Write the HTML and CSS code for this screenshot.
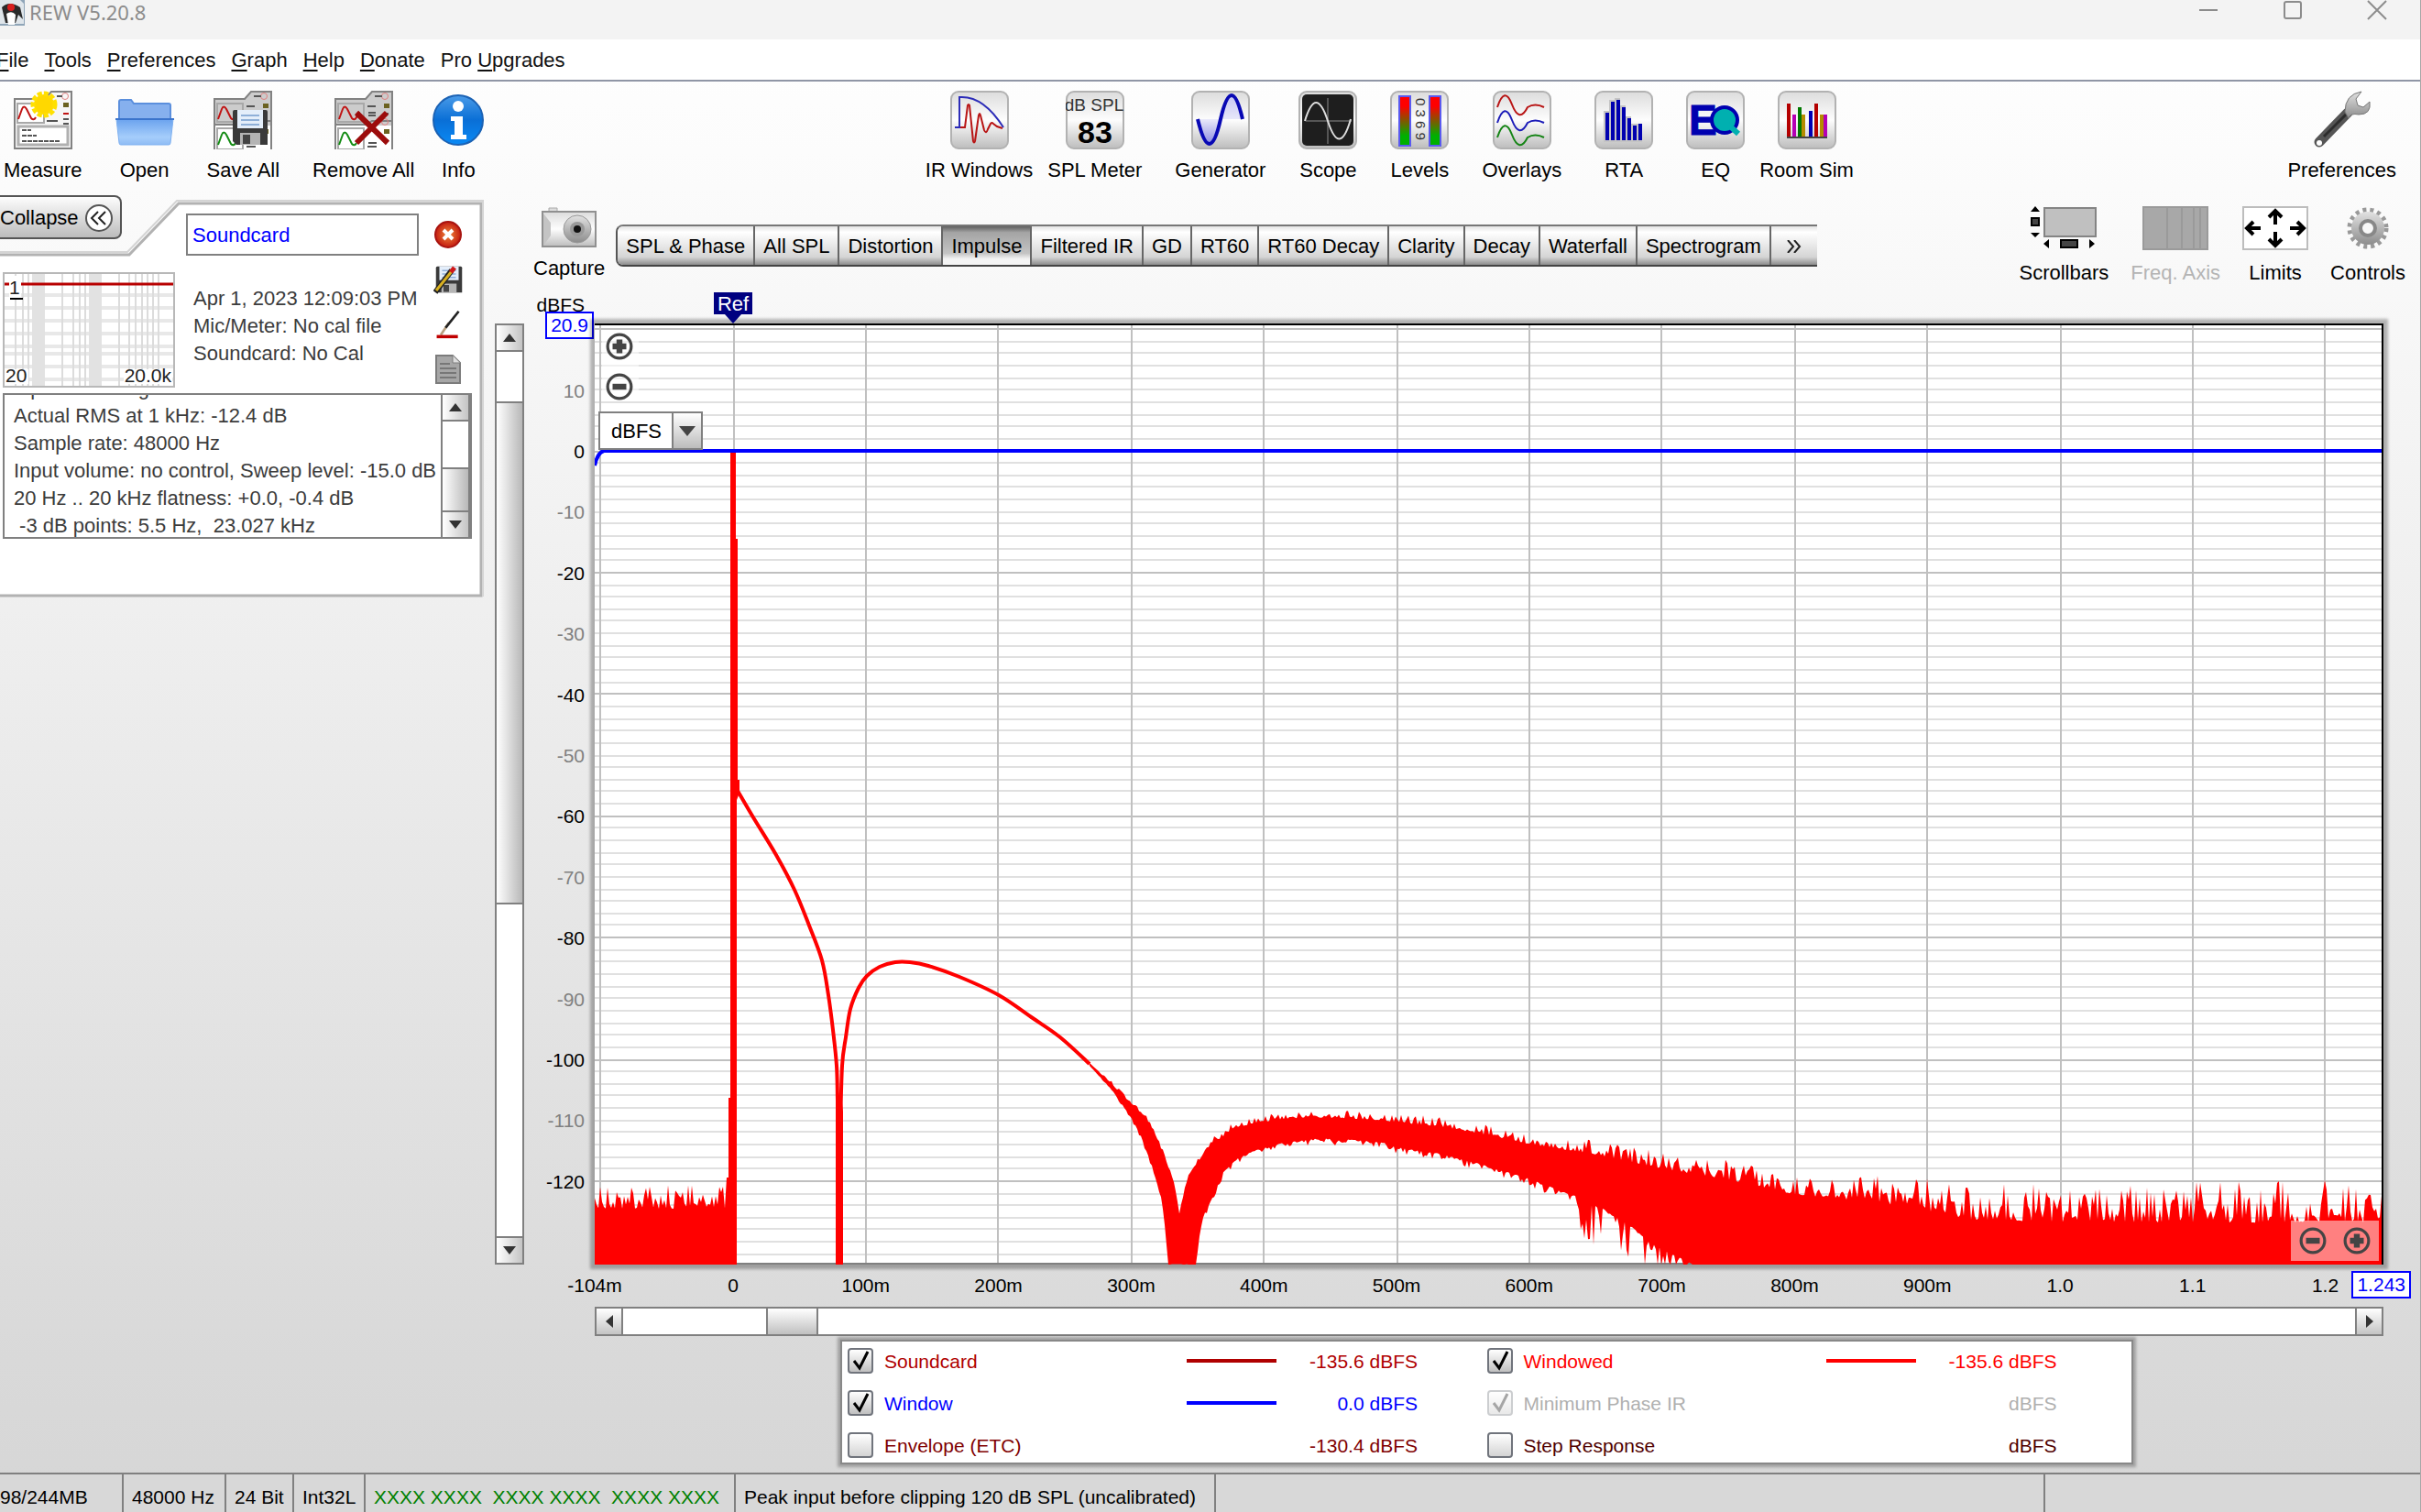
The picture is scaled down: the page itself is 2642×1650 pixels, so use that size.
FILE: index.html
```html
<!DOCTYPE html>
<html lang="en">
<head>
<meta charset="utf-8">
<title>REW V5.20.8</title>
<link rel="stylesheet" href="styles.css">
</head>
<body>
<svg class="defs" aria-hidden="true">
  <defs>
    <linearGradient id="tile" x1="0" y1="0" x2="0" y2="1"><stop offset="0" stop-color="#dcdcdc"/><stop offset=".5" stop-color="#fdfdfd"/><stop offset="1" stop-color="#bdbdbd"/></linearGradient>
    <linearGradient id="meter" x1="0" y1="0" x2="0" y2="1"><stop offset=".2" stop-color="#f00"/><stop offset=".8" stop-color="#00b000"/></linearGradient>
    <linearGradient id="folder" x1="0" y1="0" x2="0" y2="1"><stop offset="0" stop-color="#6aa2ee"/><stop offset=".7" stop-color="#a5cdfb"/><stop offset="1" stop-color="#8fbcf4"/></linearGradient>
    <linearGradient id="info" x1="0" y1="0" x2="0" y2="1"><stop offset="0" stop-color="#4a9be8"/><stop offset=".5" stop-color="#0a6fd6"/><stop offset="1" stop-color="#0a8af5"/></linearGradient>
    <linearGradient id="steel" x1="0" y1="0" x2="0" y2="1"><stop offset="0" stop-color="#e2e2e2"/><stop offset="1" stop-color="#8c8c8c"/></linearGradient>
    <linearGradient id="wave" x1="0" y1="0" x2="0" y2="1"><stop offset="0" stop-color="#c6c6f2"/><stop offset=".5" stop-color="#e8e8fa"/><stop offset="1" stop-color="#8c8ce0"/></linearGradient>
    <radialGradient id="stop"><stop offset="0" stop-color="#f08a3c"/><stop offset="1" stop-color="#c41c10"/></radialGradient>
    <symbol id="base" viewBox="0 0 64 64"><rect x="1" y="1" width="62" height="62" rx="8" fill="url(#tile)" stroke="#b2b2b2" stroke-width="2"/></symbol>
    <symbol id="floppy" viewBox="0 0 40 40"><path d="M1 3q0-2 2-2h34q2 0 2 2v36H5l-4-4z" fill="#3a3a3a"/><path d="M6 1h28v20H6z" fill="#e4eefa"/><path d="M10 7h20M10 12h20M10 17h20" stroke="#8fb0d8" stroke-width="2"/><path d="M9 26h22v13H9z" fill="#b4b4b4"/><path d="M12 28h8v10h-8z" fill="#444"/></symbol>
    <symbol id="pages" viewBox="0 0 64 64"><path d="M1 63V9h33l7-8h22v62" fill="#fff"/><path d="M1 38V9h33l7-8h22v37z" fill="#ccc"/><path d="M1 64V9h33l7-8h22v63M1 37h33l7-4h22" fill="none" stroke="#828282" stroke-width="2"/><path d="M4 14h28v20H4zM4 41h28v23H4z" fill="none" stroke="#a8a8a8" stroke-width="2"/><path d="M5 31l4-11q2-5 5 0l5 10q3 3 5-1l3-6" fill="none" stroke="#c01414" stroke-width="2"/><path d="M5 59l4-11q2-5 5 0l5 10q3 3 5-1" fill="none" stroke="#148c14" stroke-width="2"/><circle cx="55" cy="6" r="3.500" fill="none" stroke="#e08080"/><circle cx="55" cy="34" r="3.500" fill="none" stroke="#e08080"/><path d="M44 6h8M36 17h9M37 24h8M37 27h8M37 57h9M36 61h10M54 25h5M54 54h5" stroke="#555" stroke-width="2"/><path d="M54 14h6v5h-6zM54 42h6v5h-6z" fill="#6b6220"/></symbol>
    <symbol id="plus" viewBox="0 0 28 28"><circle cx="14" cy="14" r="12" fill="none" stroke="#444" stroke-width="3"/><path d="M14 7v14M7 14h14" stroke="#444" stroke-width="6"/></symbol>
    <symbol id="minus" viewBox="0 0 28 28"><circle cx="14" cy="14" r="12" fill="none" stroke="#444" stroke-width="3"/><path d="M7 14h14" stroke="#444" stroke-width="6"/></symbol>
  </defs>
</svg>

<header class="titlebar">
  <svg class="app-icon" viewBox="0 0 27 28"><rect width="27" height="28" fill="#8fa5b8"/><path d="M0 0h22l4 4v22H0z" fill="#dfe5ea"/><path d="M2 8q8-8 20 0l3 13-5-5-3 9H6z" fill="#2a2a2a"/><path d="M7 15q6-4 10 1l-1 11H9z" fill="#fff"/><circle cx="12" cy="8" r="4" fill="#d81e1e"/></svg>
  <h1>REW V5.20.8</h1>
  <div class="window-controls">
    <button type="button" aria-label="Minimize"><svg viewBox="0 0 20 20"><path d="M0 10h20"/></svg></button>
    <button type="button" aria-label="Maximize"><svg viewBox="0 0 20 20"><rect x="1" y="1" width="18" height="18" rx="2"/></svg></button>
    <button type="button" aria-label="Close"><svg viewBox="0 0 20 20"><path d="M0 0l20 20M20 0L0 20"/></svg></button>
  </div>
</header>

<nav class="menubar">
  <a href="#"><u>F</u>ile</a>
  <a href="#"><u>T</u>ools</a>
  <a href="#"><u>P</u>references</a>
  <a href="#"><u>G</u>raph</a>
  <a href="#"><u>H</u>elp</a>
  <a href="#"><u>D</u>onate</a>
  <a href="#">Pro <u>U</u>pgrades</a>
</nav>

<div class="toolbar">
  <div class="tools">
    <button type="button" class="tool"><svg viewBox="0 0 64 64"><path d="M1 63V9h33l7-8h22v62z" fill="#f6f6f6" stroke="#828282" stroke-width="2"/><path d="M4 14h29v21H4z" fill="#fff" stroke="#a8a8a8" stroke-width="2"/><path d="M5 31l4-11q2-5 5 0l5 10q3 3 5-1" fill="none" stroke="#c01414" stroke-width="2"/><path d="M5 39h54v20H5z" fill="#fff" stroke="#b0b0b0" stroke-width="3"/><path d="M9 43h10M9 49h16M9 55h41" stroke="#555" stroke-width="2" stroke-dasharray="5 1"/><circle cx="56" cy="6" r="3.500" fill="none" stroke="#e08080"/><path d="M47 6h6M36 33h12M54 31h6M54 36h6" stroke="#555" stroke-width="2"/><path d="M54 25h6" stroke="#c01414" stroke-width="2"/><path d="M54 13h6v5h-6z" fill="#6b6220"/><circle cx="33" cy="15" r="11" fill="#ffd800"/><circle cx="33" cy="15" r="12" fill="none" stroke="#ffe000" stroke-width="5" stroke-dasharray="5 2"/></svg>Measure</button>
    <button type="button" class="tool"><svg viewBox="0 0 64 64"><path d="M4 32V12q0-2 2-2h11l3 4h38q2 0 2 2v16z" fill="#86b0ee" stroke="#5b8fdd" stroke-width="2"/><path d="M1 31h62l-3 26q0 2-2 2H6q-2 0-2-2z" fill="url(#folder)" stroke="#7eb0f0"/><path d="M0 31h64" stroke="#3b74cc" stroke-width="2"/></svg>Open</button>
    <button type="button" class="tool"><svg viewBox="0 0 64 64"><use href="#pages"/><use href="#floppy" x="20" y="20" width="40" height="40"/></svg>Save All</button>
    <div class="pair">
      <button type="button" class="tool"><svg viewBox="0 0 64 64"><use href="#pages"/><path d="M24 24l34 33M57 24L24 57" stroke="#9c0c0c" stroke-width="6"/></svg>Remove All</button>
      <button type="button" class="tool"><svg class="round" viewBox="0 0 56 64"><circle cx="28" cy="32" r="27" fill="url(#info)" stroke="#1b62b4" stroke-width="2"/><circle cx="28" cy="17" r="6" fill="#fff"/><path d="M20 28h13v20h4v5H20v-5h4V33h-4z" fill="#fff"/></svg>Info</button>
    </div>
  </div>

  <div class="tools modules">
    <div class="pair">
      <button type="button" class="tool"><svg viewBox="0 0 64 64"><use href="#base"/><path d="M5 40h11l3-24q1-2 2 0l4 39q1 3 2 0l4-28q1-4 2 0l4 16q2 5 4-1l3-6q1-2 3 0l4 3 6 2" fill="none" stroke="#b81414" stroke-width="2"/><path d="M5 40h5V7q26-2 48 33" fill="none" stroke="#2c2cb8" stroke-width="2"/></svg>IR Windows</button>
      <button type="button" class="tool"><svg viewBox="0 0 64 64"><use href="#base"/><text x="31" y="22" class="tile-small">dB SPL</text><text x="32" y="57" class="tile-large">83</text></svg>SPL Meter</button>
    </div>
    <button type="button" class="tool"><svg viewBox="0 0 64 64"><use href="#base"/><path d="M7 31q13 54 25 0q12-52 24 0z" fill="url(#wave)"/><path d="M7 31q13 54 25 0q12-52 24 0" fill="none" stroke="#0808b4" stroke-width="4"/></svg>Generator</button>
    <button type="button" class="tool"><svg viewBox="0 0 64 64"><use href="#base"/><rect x="4" y="4" width="56" height="56" rx="5" fill="#1e1e1e"/><path d="M32 8v50M8 33h50" stroke="#555" stroke-width="2"/><path d="M7 33q12-40 25 0q13 40 25-2" fill="none" stroke="#ddd" stroke-width="2"/></svg>Scope</button>
    <button type="button" class="tool"><svg viewBox="0 0 64 64"><use href="#base"/><path d="M10 6h12v54H10zM43 6h12v54H43z" fill="url(#meter)" stroke="#5a5af0" stroke-width="2"/><text class="tile-digits" transform="translate(28 8) rotate(90)">0 3 6 9</text></svg>Levels</button>
    <button type="button" class="tool"><svg viewBox="0 0 64 64"><use href="#base"/><g fill="none" stroke-width="2"><path d="M5 18q8-24 16-3t17 3q8-5 18 0" stroke="#b81414"/><path d="M5 35q8-24 16-3t17 3q8-5 18 0" stroke="#1c1cb8"/><path d="M5 51q8-24 16-3t17 3q8-5 18 0" stroke="#148414"/></g></svg>Overlays</button>
    <button type="button" class="tool"><svg viewBox="0 0 64 64"><use href="#base"/><path d="M10 56V22h6V10h6V8h6v8h6v12h6v8h12v20z" fill="#c4c4c4"/><path d="M12 54V24h4v30zM18 54V12h4v42zM24 54V10h4v44zM30 54V18h4v36zM36 54V30h4v24zM42 54V38h4v16zM48 54V36h4v18z" fill="#0000b0"/></svg>RTA</button>
    <div class="pair">
      <button type="button" class="tool"><svg viewBox="0 0 64 64"><use href="#base"/><text x="3" y="48" class="tile-eq">E</text><circle cx="42" cy="32" r="14" fill="#00b0b0" stroke="#0000b0" stroke-width="4"/><path d="M46 37l11 10" stroke="#00b0b0" stroke-width="6"/></svg>EQ</button>
      <button type="button" class="tool"><svg viewBox="0 0 64 64"><use href="#base"/><path d="M10 14h4v36h-4zM40 14h4v36h-4z" fill="#b40000"/><path d="M16 26h4v24h-4zM50 26h4v24h-4z" fill="#b400b4"/><path d="M22 18h4v32h-4z" fill="#007800"/><path d="M26 26h4v24h-4zM46 26h4v24h-4z" fill="#b48c00"/><path d="M34 22h4v28h-4z" fill="#0000b4"/><path d="M10 51h44" stroke="#444" stroke-width="2"/></svg>Room Sim</button>
    </div>
  </div>

  <div class="tools">
    <button type="button" class="tool"><svg viewBox="0 0 64 64"><path d="M7 56L38 24" stroke="#555" stroke-width="11" stroke-linecap="round"/><path d="M12 50L36 26" stroke="#2c2c2c" stroke-width="3"/><circle cx="7" cy="57" r="3" fill="#fff"/><path d="M35 23q0-19 18-22l-6 8 2 7 6 2 7-6q2 14-12 14-9-2-11 4z" fill="url(#steel)" stroke="#777"/></svg>Preferences</button>
  </div>
</div>

<main class="workspace">
  <aside class="sidebar">
    <section class="card">
      <svg class="card-outline" viewBox="0 0 530 440" aria-hidden="true"><path d="M-4 65H141L195 9H525V437H-4z" fill="#fff" stroke="#b2b2b2" stroke-width="3"/><path d="M-4 62H139L193 6H527V438" fill="none" stroke="#d4d4d4" stroke-width="2"/></svg>
      <div class="card-left">
        <button type="button" class="collapse">Collapse<svg viewBox="0 0 30 30"><circle cx="15" cy="15" r="14" fill="#fff" stroke="#555" stroke-width="2"/><path d="M14 8l-7 7 7 7M22 8l-7 7 7 7" fill="none" stroke="#222" stroke-width="2"/></svg></button>
        <svg class="thumb" viewBox="0 0 188 126"><rect x="1" y="1" width="186" height="124" fill="#fff" stroke="#b8b8b8" stroke-width="2"/><path d="M2 25h184M2 39h184M2 53h184M2 67h184M2 81h184M2 89h184M2 103h184M2 117h184" stroke="#e8e8e8" stroke-width="4"/><path d="M14 2v122M22 2v122M28 2v122M65 2v122M77 2v122M84 2v122M90 2v122M127 2v122M138 2v122M145 2v122M152 2v122M158 2v122M164 2v122M170 2v122" stroke="#dcdcdc" stroke-width="2"/><path d="M32 2h14v122H32zM94 2h14v122H94z" fill="#e2e2e2"/><path d="M2 13h184" stroke="#b80000" stroke-width="3"/><path d="M7 4h13v24H7zM2 106h26v16H2zM132 106h53v16h-53z" fill="#fff"/><path d="M8 29h14" stroke="#000" stroke-width="2"/><text x="7" y="24" class="thumb-text">1</text><text x="3" y="120" class="thumb-text">20</text><text x="184" y="120" class="thumb-text end">20.0k</text></svg>
      </div>
      <div class="card-middle">
        <input class="name" type="text" value="Soundcard" aria-label="Measurement name">
        <p>Apr 1, 2023 12:09:03 PM<br>Mic/Meter: No cal file<br>Soundcard: No Cal</p>
      </div>
      <div class="card-actions">
        <button type="button" aria-label="Remove"><svg viewBox="0 0 32 32"><circle cx="16" cy="16" r="14" fill="url(#stop)" stroke="#a81410" stroke-width="2"/><path d="M11 11l10 10M21 11L11 21" stroke="#fff" stroke-width="4"/></svg></button>
        <button type="button" aria-label="Save as"><svg viewBox="0 0 32 32"><use href="#floppy" x="2" y="1" width="30" height="30"/><path d="M2 30L20 6" stroke="#222" stroke-width="6"/><path d="M3 28L20 7" stroke="#d8b020" stroke-width="3"/><path d="M19 8l4-5" stroke="#d01818" stroke-width="5"/></svg></button>
        <button type="button" aria-label="Trace colour"><svg viewBox="0 0 32 36"><path d="M7 31l10-15" stroke="#b8a080" stroke-width="3"/><path d="M13 22L29 2" stroke="#222" stroke-width="3"/><path d="M2 33h26" stroke="#c00000" stroke-width="4"/></svg></button>
        <button type="button" aria-label="Notes"><svg viewBox="0 0 32 32"><path d="M3 1h18l8 8v22H3z" fill="#a6a6a6" stroke="#7c7c7c" stroke-width="2"/><path d="M21 1v8h8" fill="#ddd" stroke="#7c7c7c"/><path d="M7 10h11M7 15h18M7 20h18M7 25h18" stroke="#777" stroke-width="2"/></svg></button>
      </div>
      <div class="notes">
        <div class="notes-text">
          <p>Input RMS target: -12.0 dB</p>
          <p>Actual RMS at 1 kHz: -12.4 dB</p>
          <p>Sample rate: 48000 Hz</p>
          <p>Input volume: no control, Sweep level: -15.0 dB</p>
          <p>20 Hz .. 20 kHz flatness: +0.0, -0.4 dB</p>
          <p>&nbsp;-3 dB points: 5.5 Hz,&nbsp; 23.027 kHz</p>
        </div>
        <div class="scroll vertical notes-scroll">
          <button type="button" class="up" aria-label="Scroll up"></button>
          <div class="track"><span class="space notes-space"></span><span class="grip notes-grip"></span></div>
          <button type="button" class="down" aria-label="Scroll down"></button>
        </div>
      </div>
    </section>
    <div class="scroll vertical list-scroll">
      <button type="button" class="up" aria-label="Scroll up"></button>
      <div class="track"><span class="space list-before"></span><span class="grip list-grip"></span><span class="space list-after"></span></div>
      <button type="button" class="down" aria-label="Scroll down"></button>
    </div>
  </aside>

  <section class="graph">
    <div class="graph-bar">
      <button type="button" class="tool capture"><svg class="camera" viewBox="0 0 60 48"><path d="M8 6V2h9v4" fill="#ddd" stroke="#aaa"/><path d="M1 6h58v38H1z" fill="url(#tile)" stroke="#909090" stroke-width="2"/><path d="M2 8l8 10v14L2 43z" fill="#c4c4c4"/><circle cx="39" cy="25" r="15" fill="url(#steel)" stroke="#999"/><circle cx="39" cy="25" r="8" fill="#999"/><circle cx="39" cy="25" r="4" fill="#111"/></svg>Capture</button>
      <div class="tabs">
        <button type="button">SPL &amp; Phase</button><button type="button">All SPL</button><button type="button">Distortion</button><button type="button" class="active">Impulse</button><button type="button">Filtered IR</button><button type="button">GD</button><button type="button">RT60</button><button type="button">RT60 Decay</button><button type="button">Clarity</button><button type="button">Decay</button><button type="button">Waterfall</button><button type="button">Spectrogram</button><button type="button" class="more" aria-label="More graphs"><svg viewBox="0 0 18 14"><path d="M2 0l6 7-6 7M9 0l6 7-6 7" fill="none" stroke="#222" stroke-width="2"/></svg></button>
      </div>
      <div class="tools graph-tools">
        <button type="button" class="tool"><svg class="wide" viewBox="0 0 72 48"><path d="M15 2h56v31H15z" fill="#c0c0c0" stroke="#848484" stroke-width="2"/><path d="M0 6h10L5 0zM0 29h10l-5 5zM20 36v10l-6-5zM64 36v10l6-5z"/><path d="M1 13h8v8H1zM33 37h18v8H33z" fill="#444" stroke="#000" stroke-width="2"/></svg>Scrollbars</button>
        <button type="button" class="tool" disabled><svg class="wide" viewBox="0 0 72 48"><path d="M1 1h70v46H1zM27 1v46M43 1v46M56 1v46M63 1v46" fill="#a8a8a8" stroke="#9a9a9a" stroke-width="2"/></svg>Freq. Axis</button>
        <button type="button" class="tool"><svg class="wide" viewBox="0 0 72 48"><path d="M1 1h70v46H1z" fill="#fff" stroke="#bdbdbd" stroke-width="2"/><path d="M36 20V7M29 12l7-7 7 7M36 28v13M29 36l7 7 7-7M20 24H7M12 17l-7 7 7 7M52 24h13M60 17l7 7-7 7" fill="none" stroke="#000" stroke-width="4"/></svg>Limits</button>
        <button type="button" class="tool"><svg class="wide" viewBox="0 0 72 48"><circle cx="36" cy="24" r="20" fill="none" stroke="#999" stroke-width="5" stroke-dasharray="4 4"/><circle cx="36" cy="24" r="18" fill="url(#steel)"/><circle cx="36" cy="24" r="8" fill="#f8f8f8" stroke="#888" stroke-width="4"/></svg>Controls</button>
      </div>
    </div>

    <div class="plot-grid">
      <div class="y-axis" id="y-axis"><span class="unit">dBFS</span><span class="limit y-limit">20.9</span></div>
      <div class="plot" id="plot">
        <div class="ref">Ref</div>
        <div class="zoom zoom-y">
          <button type="button" aria-label="Zoom in vertically"><svg><use href="#plus"/></svg></button>
          <button type="button" aria-label="Zoom out vertically"><svg><use href="#minus"/></svg></button>
        </div>
        <select class="unit-select" aria-label="Vertical unit"><option>dBFS</option><option>%</option></select>
        <div class="zoom zoom-x">
          <button type="button" aria-label="Zoom out horizontally"><svg><use href="#minus"/></svg></button>
          <button type="button" aria-label="Zoom in horizontally"><svg><use href="#plus"/></svg></button>
        </div>
      </div>
      <div class="x-axis" id="x-axis"><span class="limit x-limit">1.243</span></div>
      <div class="scroll horizontal">
        <button type="button" class="left" aria-label="Scroll left"></button>
        <div class="track"><span class="space time-before"></span><span class="grip time-grip"></span><span class="space time-after"></span></div>
        <button type="button" class="right" aria-label="Scroll right"></button>
      </div>
    </div>

    <div class="legend">
      <div class="trace dark-red"><input type="checkbox" id="t1" checked><label for="t1">Soundcard</label><i class="swatch"></i><output>-135.6 dBFS</output></div>
      <div class="trace red"><input type="checkbox" id="t2" checked><label for="t2">Windowed</label><i class="swatch"></i><output>-135.6 dBFS</output></div>
      <div class="trace blue"><input type="checkbox" id="t3" checked><label for="t3">Window</label><i class="swatch"></i><output>0.0 dBFS</output></div>
      <div class="trace off"><input type="checkbox" id="t4" checked disabled><label for="t4">Minimum Phase IR</label><i></i><output>dBFS</output></div>
      <div class="trace maroon"><input type="checkbox" id="t5"><label for="t5">Envelope (ETC)</label><i></i><output>-130.4 dBFS</output></div>
      <div class="trace brown"><input type="checkbox" id="t6"><label for="t6">Step Response</label><i></i><output>dBFS</output></div>
    </div>
  </section>
</main>

<footer class="status">
  <span class="memory">98/244MB</span>
  <span class="rate">48000 Hz</span>
  <span class="bits">24 Bit</span>
  <span class="format">Int32L</span>
  <span class="channels">XXXX XXXX&nbsp; XXXX XXXX&nbsp; XXXX XXXX</span>
  <span class="message">Peak input before clipping 120 dB SPL (uncalibrated)</span>
  <span class="spare"></span>
  <span class="last"></span>
</footer>
<script src="chart.js"></script>
</body>
</html>
```
FILE: styles.css
```css
* { box-sizing: border-box; }

body {
  margin: 0;
  min-height: 100vh;
  display: flex;
  flex-direction: column;
  overflow-x: hidden;
  background: linear-gradient(#fff, #fcfcfc 10%, #f0f0f0 38%, #d9d9d9 90%, #d6d6d6);
  border-right: 1px solid #a8a8a8;
  color: #000;
  font: 22px/30px "Liberation Sans", Arial, sans-serif;
}

button, input, select {
  margin: 0;
  padding: 0;
  border: 0;
  background: none;
  color: inherit;
  font: inherit;
}

p, h1 { margin: 0; }

.defs { position: absolute; width: 0; height: 0; }

.titlebar {
  display: flex;
  align-items: flex-start;
  height: 43px;
  background: #f3f3f3;
  color: #8c8c8c;
}
.app-icon { width: 27px; height: 28px; }
.titlebar h1 {
  margin-left: 5px;
  font: 22px/26px "Noto Sans", "Open Sans", sans-serif;
}
.window-controls { display: flex; gap: 72px; margin-left: auto; padding-right: 37px; }
.window-controls svg {
  display: block;
  width: 20px;
  height: 22px;
  overflow: visible;
  fill: none;
  stroke: #8c8c8c;
  stroke-width: 2;
}

.menubar {
  display: flex;
  gap: 17px;
  height: 46px;
  margin-left: -4px;
  padding-top: 8px;
  background: #fff;
  border-bottom: 2px solid #9096a6;
}
.menubar a { color: #111; text-decoration: none; }
.menubar u { text-underline-offset: 3px; text-decoration-thickness: 2px; }

.toolbar {
  display: flex;
  justify-content: space-between;
  height: 116px;
  padding: 10px 26px 0 4px;
}
.tools { display: flex; align-items: flex-start; gap: 36px; }
.pair { display: flex; gap: 20px; }
.modules { margin-left: 8px; }
.modules .pair { gap: 16px; }
.tool {
  display: flex;
  flex-direction: column;
  align-items: center;
  gap: 8px;
  white-space: nowrap;
}
.tool svg { width: 64px; height: 64px; }
.tool svg.round { width: 56px; }
.tool svg.wide { width: 72px; height: 48px; }
.tool svg.camera { width: 60px; height: 48px; }
.tool:disabled { color: #b4b4b4; }
.tile-small { font-size: 19px; text-anchor: middle; fill: #333; }
.tile-large { font-size: 34px; font-weight: bold; text-anchor: middle; }
.tile-digits { font-size: 15px; fill: #333; }
.tile-eq { font-size: 46px; font-weight: bold; fill: #0000b0; stroke: #0000b0; }

.workspace { flex: 1; display: flex; }
.sidebar { display: flex; align-items: flex-start; gap: 10px; width: 572px; }

.card {
  position: relative;
  display: grid;
  grid-template-columns: 203px 254px 48px;
  width: 530px;
  height: 448px;
  align-content: start;
  padding-top: 8px;
}
.card-outline { position: absolute; z-index: -1; left: 0; top: 8px; width: 530px; height: 440px; }
.card-left { display: flex; flex-direction: column; align-items: flex-start; gap: 36px; }
.collapse {
  display: flex;
  align-items: center;
  gap: 7px;
  width: 133px;
  height: 48px;
  padding-top: 2px;
  border: 2px solid #555;
  border-left: 0;
  border-radius: 0 8px 8px 0;
  background: linear-gradient(#fdfdfd, #bcbcbc);
}
.collapse svg { width: 30px; height: 30px; flex: none; }
.thumb { width: 188px; height: 126px; margin-left: 3px; }
.thumb-text { font-size: 21px; fill: #222; }
.end { text-anchor: end; }

.card-middle { padding-top: 20px; }
.name {
  width: 254px;
  height: 46px;
  padding: 2px 5px 0;
  border: 2px solid #808080;
  background: #fff;
  color: #00f;
}
.card-middle p { padding: 32px 0 0 8px; color: #3c3c3c; white-space: nowrap; }
.card-actions {
  display: flex;
  flex-direction: column;
  gap: 17px;
  padding: 27px 0 0 16px;
}
.card-actions svg { display: block; width: 32px; height: 32px; }

.notes {
  grid-column: 1 / -1;
  display: flex;
  width: 512px;
  height: 159px;
  margin: 6px 0 0 3px;
  border: 2px solid #808080;
  background: #fff;
}
.notes-text {
  flex: 1;
  display: flex;
  flex-direction: column;
  justify-content: flex-end;
  overflow: hidden;
  padding-left: 10px;
  color: #3c3c3c;
  white-space: nowrap;
}
.notes-text p:last-child { margin-bottom: -3px; }

.scroll { display: flex; border: 2px solid #808080; background: #fff; }
.scroll button {
  flex: none;
  display: flex;
  align-items: center;
  justify-content: center;
  background: linear-gradient(#fff, #c4c4c4);
}
.scroll button::after { content: ""; border: 7px solid transparent; }
.scroll .track { flex: 1; display: flex; }
.vertical { flex-direction: column; width: 32px; }
.vertical .track { flex-direction: column; }
.vertical button { height: 29px; background: linear-gradient(90deg, #fff, #c4c4c4); }
.vertical .up { border-bottom: 2px solid #808080; }
.vertical .down { border-top: 2px solid #808080; }
.scroll .up::after { border-top: 0; border-bottom: 9px solid #333; }
.scroll .down::after { border-bottom: 0; border-top: 9px solid #333; }
.scroll .left::after { border-left: 0; border-right: 8px solid #333; }
.scroll .right::after { border-right: 0; border-left: 8px solid #333; }
.vertical .grip { border: solid #808080; border-width: 2px 0; background: linear-gradient(90deg, #fff, #b8b8b8); }
.notes-scroll { border-width: 0 2px; }
.notes-scroll .grip { border-bottom: 0; }
.notes-space { flex: 51; }
.notes-grip { flex: 46; }

.list-scroll { align-self: stretch; margin: 148px 0 227px; }
.list-before { flex: 54; }
.list-grip { flex: 547; }
.list-after { flex: 363; }

.graph { flex: 1; display: flex; flex-direction: column; min-width: 0; }
.graph-bar { display: flex; align-items: flex-start; height: 148px; padding: 20px 16px 0 10px; }
.capture .camera { margin-bottom: -3px; }
.tabs {
  display: flex;
  height: 46px;
  margin: 20px 0 0 12px;
  border: 2px solid #666;
  border-color: #777 #555 #444;
  border-right: 0;
  border-radius: 8px 0 0 8px;
  overflow: hidden;
}
.tabs button {
  padding: 2px 9px 0;
  border-right: 2px solid #666;
  background: linear-gradient(#e4e4e4, #fff 15%, #d4d4d4 80%, #8c8c8c);
  white-space: nowrap;
}
.tabs .active { background: linear-gradient(#606060, #a4a4a4 16%, #c4c4c4 70%, #f4f4f4 85%); }
.tabs .more { width: 50px; border-right: 0; }
.more svg { width: 18px; height: 14px; }
.graph-tools { gap: 24px; margin-left: auto; }
.graph-tools .tool { gap: 10px; }

.plot-grid {
  flex: 1;
  display: grid;
  grid-template: 1fr 46px 32px / 77px 1fr;
  padding-right: 40px;
}
.y-axis, .x-axis { position: relative; font-size: 21px; }
.y-axis span, .x-axis span { position: absolute; line-height: 22px; white-space: nowrap; }
.y-axis .tick { right: 11px; padding-top: 2px; transform: translateY(-50%); }
.y-axis .minor { color: #808080; }
.y-axis .unit { right: 11px; top: -31px; }
.x-axis .tick { top: 12px; transform: translateX(-50%); }
.y-axis .limit, .x-axis .limit {
  border: 2px solid #00f;
  background: #fff;
  color: #00f;
  padding: 0 4px;
  line-height: 26px;
}
.y-axis .y-limit { right: 1px; top: -13px; }
.x-axis .x-limit { right: -30px; top: 7px; }
.x-axis { grid-column: 2; }
.horizontal { grid-column: 2; }
.horizontal button { width: 29px; }
.horizontal .left, .horizontal .grip { border-right: 2px solid #808080; }
.horizontal .right, .horizontal .grip { border-left: 2px solid #808080; }
.horizontal .grip { background: linear-gradient(#fff, #c0c0c0); }
.time-before { flex: 156; }
.time-grip { flex: 52; }
.time-after { flex: 1673; }

.plot {
  position: relative;
  background: #fff;
  border: solid #000;
  border-width: 2px 2px 0 0;
  box-shadow: 0 0 3px 5px rgba(0, 0, 0, .28);
}
.plot .chart { position: absolute; left: 0; top: -2px; width: calc(100% + 2px); height: calc(100% + 2px); }
.ref {
  position: absolute;
  left: 130px;
  top: -36px;
  width: 42px;
  height: 24px;
  background: #000080;
  color: #fff;
  line-height: 26px;
  text-align: center;
}
.ref::after {
  content: "";
  position: absolute;
  left: 12px;
  top: 24px;
  border: 9px solid transparent;
  border-top: 10px solid #000080;
  border-bottom: 0;
}
.zoom { position: absolute; display: flex; }
.zoom svg { display: block; width: 30px; height: 30px; }
.zoom-y { flex-direction: column; gap: 14px; left: 8px; top: 8px; padding: 0 6px 0 4px; background: rgba(255, 255, 255, .5); }
.zoom-x { gap: 18px; right: 3px; bottom: 4px; padding: 7px 9px; background: rgba(255, 255, 255, .5); }
.unit-select {
  position: absolute;
  left: 4px;
  top: 94px;
  width: 114px;
  height: 42px;
  padding: 2px 0 0 12px;
  appearance: none;
  border: 2px solid #808080;
  background:
    url("data:image/svg+xml,%3Csvg xmlns='http://www.w3.org/2000/svg' width='18' height='11'%3E%3Cpath d='M0 0h18L9 11z' fill='%23444'/%3E%3C/svg%3E") no-repeat right 6px center,
    linear-gradient(#808080, #808080) no-repeat right 30px top / 2px 100%,
    linear-gradient(#fff, #bcbcbc) no-repeat right / 30px 100%,
    #fff;
}

.legend {
  display: grid;
  grid-template-columns: 1fr 1fr;
  grid-auto-rows: 46px;
  align-content: center;
  align-self: center;
  width: 1411px;
  height: 136px;
  margin: 4px 0 9px 32px;
  padding: 1px 6px 0;
  border: 2px solid #888;
  background: #fff;
  box-shadow: 0 0 3px 3px rgba(0, 0, 0, .26);
  font-size: 21px;
}
.trace {
  display: grid;
  grid-template-columns: 28px 342px 98px 154px;
  align-items: center;
}
.trace label { padding: 2px 0 0 12px; }
.trace output { padding-top: 2px; text-align: right; }
.swatch { height: 4px; background: currentColor; }
.trace input {
  width: 28px;
  height: 28px;
  appearance: none;
  border: 2px solid #70747c;
  border-radius: 4px;
  background: linear-gradient(#fff, #d4d4d4);
}
.trace input:checked {
  background:
    url("data:image/svg+xml,%3Csvg xmlns='http://www.w3.org/2000/svg' viewBox='0 0 24 24'%3E%3Cpath d='M5 12l6 8L20 2' fill='none' stroke='%23000' stroke-width='3'/%3E%3C/svg%3E") center / 24px 24px no-repeat,
    linear-gradient(#fff, #c0c0c0);
}
.trace input:disabled { opacity: .35; }
.dark-red { color: #b00000; }
.red { color: #f00; }
.blue { color: #00f; }
.off { color: #b0b0b0; }
.maroon { color: #800000; }
.brown { color: #500000; }

.status {
  display: flex;
  height: 43px;
  border-top: 2px solid #808080;
  background: #d8d8d8;
  font-size: 21px;
  white-space: nowrap;
}
.status span { padding: 10px 0 0 9px; border-right: 2px solid #808080; }
.status .memory { width: 135px; padding-left: 0; }
.status .rate { width: 112px; }
.status .bits { width: 74px; }
.status .format { width: 78px; }
.status .channels { width: 404px; color: #008000; }
.status .message { width: 524px; }
.status .spare { flex: 1; }
.status .last { width: 409px; border-right: 0; }
```
FILE: chart.js
```js
// Impulse response plot. Trace points are in plot units: 1952 wide, 1027 high.
(() => {
const W = 1952, H = 1027;
const X0 = 151, PX_PER_100MS = 144.8;
const Y0 = 139, PX_PER_DB = 6.64;
const even = v => Math.round(v / 2) * 2;

// Small repeatable generator, so the noise floor is the same on every load.
let seed = 20230401;
const rnd = () => {
  seed = (seed * 1664525 + 1013904223) % 4294967296;
  return seed / 4294967296;
};

const lerp = (pts, x) => {
  for (let i = 1; i < pts.length; i++) {
    if (x <= pts[i][0]) {
      const [a, b] = pts[i - 1], [c, d] = pts[i];
      return b + (d - b) * (x - a) / (c - a);
    }
  }
  return pts[pts.length - 1][1];
};

// Catmull-Rom spline through the points.
const smooth = pts => {
  let d = `M${pts[0]}`;
  for (let i = 0; i < pts.length - 1; i++) {
    const p = pts[i - 1] || pts[i], a = pts[i], b = pts[i + 1], n = pts[i + 2] || b;
    d += `C${a[0] + (b[0] - p[0]) / 6} ${a[1] + (b[1] - p[1]) / 6} ${b[0] - (n[0] - a[0]) / 6} ${b[1] - (n[1] - a[1]) / 6} ${b[0]} ${b[1]}`;
  }
  return d;
};

let minor = '', major = '', vertical = '';
for (let db = 20; db >= -132; db -= 2) {
  const line = `M0 ${even(Y0 - db * PX_PER_DB)}h${W}`;
  if (db % 20 === 0) major += line; else minor += line;
}
for (let n = -1; n <= 12; n++) vertical += `M${even(X0 + n * PX_PER_100MS)} 0v${H}`;

// Upper and lower edges of the decaying tail, and spread of the noise on each.
const upper = [[540,807],[564,829],[585,850],[601,865],[613,886],[621,907],[629,927],[634,947],[638,970],[642,952],[648,929],[657,915],[666,903],[674,892],[684,887],[696,877],[711,873],[731,869],[751,866],[781,864],[821,865],[861,867],[875,869],[921,873],[961,880],[1021,892],[1091,902],[1165,917],[1231,927],[1309,943],[1391,950],[1455,958],[1501,966],[1599,968],[1700,968],[1800,968],[1952,967]];
const lower = [[540,810],[564,836],[585,866],[596,887],[609,922],[619,957],[623,992],[626,1027],[656,1027],[659,1002],[664,975],[673,957],[686,927],[701,912],[721,903],[751,895],[791,890],[831,892],[861,895],[875,900],[921,907],[961,917],[1001,929],[1021,935],[1051,947],[1086,958],[1111,975],[1131,987],[1151,1005],[1171,1015],[1210,1035],[1952,1100]];
const spread = [[540,0],[564,2],[700,4],[1000,7],[1165,11],[1391,17],[1501,24],[1952,28]];

const above = [], below = [];
for (let x = 540; x <= W; x += 2) {
  const s = lerp(spread, x);
  const r = rnd();
  above.push(`${x} ${(lerp(upper, x) + s * .5 - r * r * s * 1.7).toFixed(1)}`);
  const depth = x > 1060 ? 50 : s * 1.4;
  const q = rnd();
  below.push(`${x} ${Math.min(H, lerp(lower, x) - s * .2 + q * q * q * depth).toFixed(1)}`);
}
const tail = `M${above.join('L')}L${below.reverse().join('L')}Z`;

let lead = `M0 ${H}`;
for (let x = 0; x <= 142; x += 2) lead += `L${x} ${(966 - Math.pow(rnd(), 1.5) * 26).toFixed(1)}`;
lead += `L144 932H146V845H148V139H154V235H156V498H158V512L155 520V${H}Z`;

const falling = [[156,510],[173,539],[198,580],[218,618],[234,657],[248,695],[255,733],[260,771],[264,810],[265,848],[266,880]];
const rising = [[268,880],[270,810],[274,779],[279,748],[288,725],[297,712],[311,702],[328,697],[344,697],[364,701],[398,713],[441,733],[478,758],[508,779],[540,808]];
const decay = smooth(falling) + smooth(rising);

const svg = `<svg class="chart" viewBox="0 0 ${W} ${H}" preserveAspectRatio="none" aria-label="Impulse response">
<g fill="none" stroke-width="2" shape-rendering="crispEdges">
<path d="${minor}" stroke="#e0e0e0"/><path d="${vertical}${major}" stroke="#c0c0c0"/>
<path d="M0 ${H - 1}H${W}" stroke="#808080"/>
<path d="M0 1H${W}" stroke="#000"/></g>
<path d="${decay}" fill="none" stroke="#f00" stroke-width="4"/>
<path d="${lead}${tail}" fill="#f00"/>
<path d="M263 ${H}V840L267 870L269 840L271 860V${H}z" fill="#f00"/>
<path d="M0 155Q3 141 10 139H${W}" fill="none" stroke="#0000ff" stroke-width="4"/>
<path d="M${W - 1} 0V${H}" stroke="#000" stroke-width="2"/>
</svg>`;
document.getElementById('plot').insertAdjacentHTML('afterbegin', svg);

const addTick = (id, text, side, share, kind) => {
  document.getElementById(id).insertAdjacentHTML('beforeend',
    `<span class="tick ${kind}" style="${side}:${share.toFixed(2)}%">${text}</span>`);
};
for (let db = 10; db >= -120; db -= 10) {
  addTick('y-axis', db, 'top', (Y0 - db * PX_PER_DB) / H * 100, db % 20 ? 'minor' : 'main');
}
addTick('x-axis', '-104m', 'left', 0, 'main');
for (let n = 0; n <= 12; n++) {
  const text = n === 0 ? '0' : n < 10 ? n + '00m' : (n / 10).toFixed(1);
  addTick('x-axis', text, 'left', (X0 + n * PX_PER_100MS) / W * 100, 'main');
}
})();
```
